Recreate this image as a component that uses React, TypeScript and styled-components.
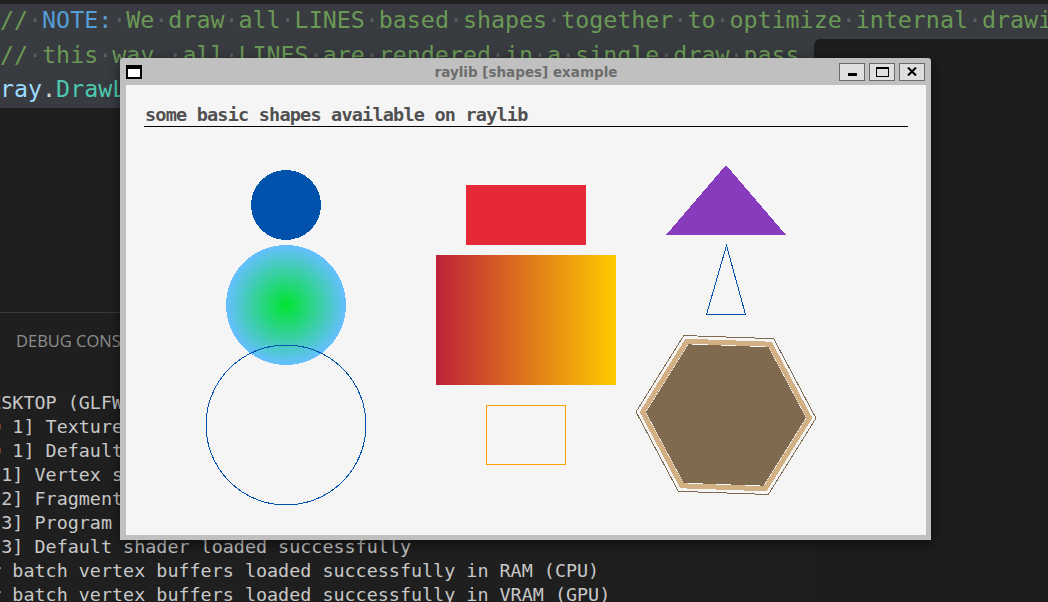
import React from 'react';
import styled, { createGlobalStyle } from 'styled-components';

const GlobalStyle = createGlobalStyle`
  html, body { margin: 0; padding: 0; background: #1f1f1f; overflow: hidden; }
  #root { width: 1048px; height: 602px; }
`;

const Desktop = styled.div`
  position: relative;
  width: 1048px;
  height: 602px;
  overflow: hidden;
  background: #1f1f1f;
  display: flex;
  flex-direction: column;
`;

const TopGutter = styled.div`
  flex: none;
  height: 4px;
  background: #222222;
`;

const CodeBand = styled.div`
  flex: none;
  height: 104px;
  overflow: hidden;
  background: #383b40;
  font-family: "DejaVu Sans Mono", monospace;
  font-size: 23.3px;
  line-height: 34.667px;
  white-space: pre;
`;

const CodeLine = styled.div`
  height: 34.667px;
  margin-top: -1px;
  margin-bottom: 1px;
`;

const Tok = styled.span<{ $c: string }>`
  color: ${(p) => p.$c};
`;

const Ws = styled.span`
  color: rgba(227, 228, 226, 0.22);
`;

const EditorBody = styled.div`
  flex: none;
  height: 204px;
  background: #1f1f1f;
`;

const Panel = styled.div`
  flex: 1;
  display: flex;
  flex-direction: column;
  border-top: 1px solid #3a3a3a;
  background: #1f1f1f;
  overflow: hidden;
`;

const PanelTabs = styled.div`
  flex: none;
  height: 55px;
  display: flex;
  align-items: center;
  padding-left: 16px;
  font-family: "Open Sans", sans-serif;
  font-size: 16.5px;
  color: #8d8d8d;
`;

const Console = styled.div`
  padding-top: 23px;
  font-family: "DejaVu Sans Mono", monospace;
  font-size: 18.4px;
  line-height: 24px;
  color: #c8c8c8;
  white-space: pre;
  overflow: hidden;
`;

const ConsoleLine = styled.div`
  margin-left: -198px;
  height: 24px;
`;

const SidePane = styled.div`
  position: absolute;
  left: 814px;
  top: 39px;
  right: 0;
  bottom: 0;
  background: #1d1d1d;
  border-top-left-radius: 6px;
`;

const Window = styled.div`
  position: absolute;
  left: 120px;
  top: 58px;
  width: 811px;
  box-sizing: border-box;
  padding: 0 5px 5px 6px;
  background: #c0c0c0;
  border-radius: 3px 3px 0 0;
  box-shadow: 0 4px 14px rgba(0, 0, 0, 0.55);
`;

const TitleBar = styled.div`
  height: 27px;
  display: grid;
  grid-template-columns: 1fr auto 1fr;
  align-items: center;
`;

const AppIcon = styled.div`
  width: 16px;
  height: 14px;
  box-sizing: border-box;
  border: 2px solid #000;
  border-top-width: 4px;
  background: #fff;
`;

const Title = styled.div`
  font-family: "DejaVu Sans", sans-serif;
  font-weight: bold;
  font-size: 13.5px;
  color: #6d6d6d;
`;

const Controls = styled.div`
  justify-self: end;
  display: flex;
  gap: 4px;
  margin-right: 1px;
`;

const CtlButton = styled.div<{ $bottom?: boolean }>`
  width: 26px;
  height: 18px;
  box-sizing: border-box;
  border: 1px solid #6a6a6a;
  background: #dfdfdf;
  display: flex;
  justify-content: center;
  align-items: ${(p) => (p.$bottom ? 'flex-end' : 'center')};
  padding-bottom: ${(p) => (p.$bottom ? '4px' : '0')};
`;

const MinGlyph = styled.div`
  width: 9px;
  height: 3px;
  background: #000;
`;

const MaxGlyph = styled.div`
  width: 13px;
  height: 10px;
  box-sizing: border-box;
  border: 1px solid #000;
  border-top-width: 2px;
`;

const Client = styled.div`
  position: relative;
  width: 800px;
  height: 450px;
  background: #f5f5f5;
  overflow: hidden;
`;

const Canvas = styled.svg`
  position: absolute;
  inset: 0;
`;

const Heading = styled.div`
  position: relative;
  z-index: 1;
  padding: 20px 0 0 19px;
  font-family: "DejaVu Sans Mono", monospace;
  font-weight: bold;
  font-size: 18.5px;
  line-height: 20px;
  letter-spacing: -0.8px;
  color: #505050;
  white-space: pre;
`;

const C = {
  green: '#6a9955',
  blue: '#569cd6',
  var: '#9cdcfe',
  punct: '#d4d4d4',
  fn: '#4ec9b0',
};

function withDots(text: string, color: string, key: string) {
  const parts = text.split(' ');
  const out: React.ReactNode[] = [];
  parts.forEach((p, i) => {
    if (i > 0) out.push(<Ws key={`${key}-w${i}`}>·</Ws>);
    if (p) out.push(<Tok key={`${key}-t${i}`} $c={color}>{p}</Tok>);
  });
  return out;
}

function hex(r: number, rot = 2) {
  return Array.from({ length: 6 }, (_, i) => {
    const a = ((rot + 60 * i) * Math.PI) / 180;
    return `${(600 + r * Math.cos(a)).toFixed(2)},${(330 + r * Math.sin(a)).toFixed(2)}`;
  }).join(' ');
}

const consoleLines = [
  'INFO: PLATFORM: DESKTOP (GLFW): Initialized successfully',
  'INFO: TEXTURE: [ID 1] Texture loaded successfully (1x1 | R8G8B8A8 | 1 mipmaps)',
  'INFO: TEXTURE: [ID 1] Default texture loaded successfully',
  'INFO: SHADER: [ID 1] Vertex shader compiled successfully',
  'INFO: SHADER: [ID 2] Fragment shader compiled successfully',
  'INFO: SHADER: [ID 3] Program shader loaded successfully',
  'INFO: SHADER: [ID 3] Default shader loaded successfully',
  'INFO: RLGL: Render batch vertex buffers loaded successfully in RAM (CPU)',
  'INFO: RLGL: Render batch vertex buffers loaded successfully in VRAM (GPU)',
];

export default function App() {
  return (
    <>
      <GlobalStyle />
      <Desktop>
        <TopGutter />
        <CodeBand>
          <CodeLine>
            <Tok $c={C.green}>//</Tok>
            <Ws>·</Ws>
            <Tok $c={C.blue}>NOTE:</Tok>
            <Ws>·</Ws>
            {withDots('We draw all LINES based shapes together to optimize internal drawing,', C.green, 'l1')}
          </CodeLine>
          <CodeLine>
            {withDots('// this way, all LINES are rendered in a single draw pass', C.green, 'l2')}
          </CodeLine>
          <CodeLine>
            <Tok $c={C.var}>ray</Tok>
            <Tok $c={C.punct}>.</Tok>
            <Tok $c={C.fn}>DrawLine</Tok>
          </CodeLine>
        </CodeBand>
        <EditorBody />
        <Panel>
          <PanelTabs>DEBUG CONSOLE</PanelTabs>
          <Console>
            {consoleLines.map((l, i) => (
              <ConsoleLine key={i}>{l}</ConsoleLine>
            ))}
          </Console>
        </Panel>

        <SidePane />

        <Window>
          <TitleBar>
            <AppIcon />
            <Title>raylib [shapes] example</Title>
            <Controls>
              <CtlButton $bottom>
                <MinGlyph />
              </CtlButton>
              <CtlButton>
                <MaxGlyph />
              </CtlButton>
              <CtlButton>
                <svg width="10" height="9" viewBox="0 0 10 9">
                  <path d="M1 0.5 L9 8.5 M9 0.5 L1 8.5" stroke="#000" strokeWidth="2" />
                </svg>
              </CtlButton>
            </Controls>
          </TitleBar>
          <Client>
            <Canvas width="800" height="450" viewBox="0 0 800 450" shapeRendering="crispEdges">
              <defs>
                <radialGradient id="gradCircle" cx="0.5" cy="0.5" r="0.5">
                  <stop offset="0" stopColor="#00e430" />
                  <stop offset="1" stopColor="#66bfff" />
                </radialGradient>
                <linearGradient id="gradRect" x1="0" y1="0" x2="1" y2="0">
                  <stop offset="0" stopColor="#be2137" />
                  <stop offset="1" stopColor="#ffcb00" />
                </linearGradient>
              </defs>
              <line x1="18" y1="41.5" x2="782" y2="41.5" stroke="#000" strokeWidth="1" />

              <circle cx="160" cy="120" r="35" fill="#0052ac" />
              <circle cx="160" cy="220" r="60" fill="url(#gradCircle)" />
              <circle cx="160" cy="340" r="80" fill="none" stroke="#0052ac" strokeWidth="1" />

              <rect x="340" y="100" width="120" height="60" fill="#e62937" />
              <rect x="310" y="170" width="180" height="130" fill="url(#gradRect)" />
              <rect x="360.5" y="320.5" width="79" height="59" fill="none" stroke="#ffa100" strokeWidth="1" />

              <polygon points="600,80 540,150 660,150" fill="#873cbe" />
              <polygon points="600.5,160.5 580.5,229.5 619.5,229.5" fill="none" stroke="#0052ac" strokeWidth="1" />

              <polygon points={hex(80)} fill="#7f6a4f" />
              <polygon points={hex(90)} fill="none" stroke="#7f6a4f" strokeWidth="1" />
              <polygon points={hex(83.5)} fill="none" stroke="#d3b083" strokeWidth="5" strokeLinejoin="miter" />
            </Canvas>
            <Heading>some basic shapes available on raylib</Heading>
          </Client>
        </Window>
      </Desktop>
    </>
  );
}
